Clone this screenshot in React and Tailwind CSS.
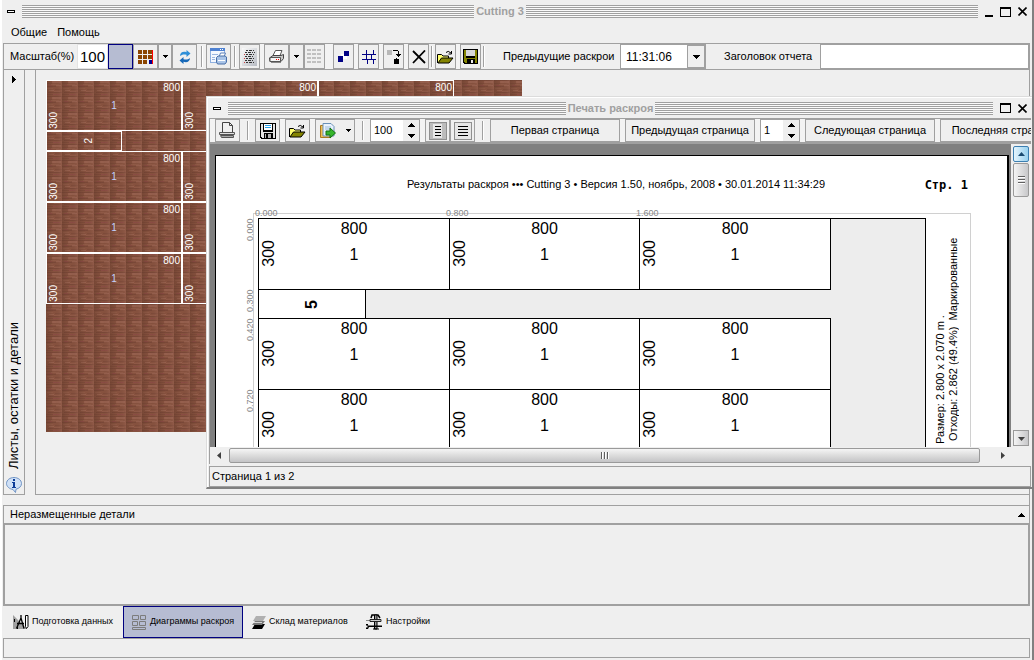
import clsx from 'clsx';

const Stripes = () => (
  <div className="flex-1 h-[13px] bg-[repeating-linear-gradient(to_bottom,#a0a0a0_0px,#a0a0a0_1px,#fafafa_1px,#fafafa_2px)]" />
);

const MenuBox = () => (
  <button aria-label="Системное меню" className="w-[8px] h-[3px] border border-black bg-white" />
);

const MaximizeIcon = () => (
  <svg width="11" height="10" shapeRendering="crispEdges"><path d="M0 0h11v10H0zM1 2v7h9V2z" fillRule="evenodd" /></svg>
);

const CloseIcon = () => (
  <svg width="9" height="9"><path d="M.5 .5l8 8M8.500 .5l-8 8" stroke="#000" strokeWidth="1.6" /></svg>
);

function TitleBar({ title, minimize, className }) {
  return (
    <div className={clsx('flex items-center shrink-0', className)}>
      <MenuBox />
      <div className="flex flex-1 items-center mx-[7px] gap-[2px]">
        <Stripes />
        <h1 className="text-[11px] leading-[13px] font-bold text-[#a0a0a0] whitespace-nowrap">{title}</h1>
        <Stripes />
      </div>
      <div className="flex items-center gap-[7px]">
        {minimize && (
          <button aria-label="Свернуть" className="h-[10px] flex items-end"><span className="block w-2 h-[2px] bg-black" /></button>
        )}
        <button aria-label="Развернуть"><MaximizeIcon /></button>
        <button aria-label="Закрыть"><CloseIcon /></button>
      </div>
    </div>
  );
}

/* ---- icons ---- */

const Down = () => <svg width="5" height="3" shapeRendering="crispEdges"><path d="M0 0h5v1H0zM1 1h3v1H1zM2 2h1v1H2z" /></svg>;
const BigDown = () => <svg width="7" height="4" shapeRendering="crispEdges"><path d="M0 0h7v1H0zM1 1h5v1H1zM2 2h3v1H2zM3 3h1v1H3z" /></svg>;
const BigUp = () => <svg width="7" height="4" shapeRendering="crispEdges"><path d="M3 0h1v1H3zM2 1h3v1H2zM1 2h5v1H1zM0 3h7v1H0z" /></svg>;

const ColorGridIcon = () => (
  <svg width="16" height="14" shapeRendering="crispEdges">
    <path d="M0 0h4v4H0zM5 0h4v4H5zM10 0h4v4h-4zM0 5h4v4H0zM5 5h4v4H5zM10 5h4v4h-4zM0 10h4v4H0zM5 10h4v4H5z" fill="#8b4500" />
    <path d="M11 10h3v4h-3z" fill="#000090" />
    <path d="M14 0h1v14h-1z" fill="#f00" />
  </svg>
);

const RefreshIcon = () => (
  <svg width="12" height="14" viewBox="0 0 12 14">
    <path d="M1 6C1 2.500 4 1 7.500 2.200V0L11.500 3.500 7.500 7V4.800C5 4 3 4.300 1 6z" fill="#2e8fd8" />
    <path d="M11 8c0 3.500-3 5-6.500 3.800V14L.5 10.500 4.500 7v2.200C7 10 9 9.700 11 8z" fill="#1668b8" />
  </svg>
);

const ReportIcon = () => (
  <svg width="17" height="17" viewBox="0 0 17 17">
    <rect x=".5" y=".5" width="14" height="14" fill="#f4f8ff" stroke="#8fb0e0" />
    <path d="M0 0h15v3H0z" fill="#4f82d2" />
    <path d="M10 1h1v1h-1zM12 1h1v1h-1z" fill="#fff" />
    <path d="M2 6.500h6M2 9.500h3M2 11.500h3" stroke="#9ab6e0" />
    <path d="M9 9l1.500-4h5L14 9z" fill="#fff" stroke="#5a7fb8" />
    <path d="M6.500 9.500L8 8h7l1.500 1v5l-1.500 2H7.500l-1-2z" fill="#a9c4e8" stroke="#4a70a8" />
    <path d="M8 12.500h7" stroke="#fff" />
  </svg>
);

const TextListIcon = () => (
  <svg width="15" height="18" shapeRendering="crispEdges">
    <defs>
      <linearGradient id="paper" x2="1" y2="1"><stop offset="0" stopColor="#fafafa" /><stop offset="1" stopColor="#b8bcc4" /></linearGradient>
    </defs>
    <path d="M0 0h15v18H0z" fill="url(#paper)" />
    <path d="M3.500 2.500h9M2.500 4.500h10M3.500 6.500h9M2.500 8.500h9M3.500 10.500h9M2.500 12.500h9M3.500 14.500h9" stroke="#333" strokeDasharray="2 1 3 1 1 1" />
    <path d="M2 6h1v1H2zM2 10h1v1H2zM2 14h1v1H2z" fill="#d04040" />
  </svg>
);

const PrinterIcon = () => (
  <svg width="15" height="13" viewBox="0 0 15 13">
    <path d="M4 5.500L6.500 .5H13l-2 5z" fill="#fff" stroke="#555" />
    <path d="M.5 8L4 5.500h8l2.500-1v4L12 11.500H1z" fill="#c8c8c8" stroke="#444" />
    <path d="M1 7.500h10.500v4H1z" fill="#f5f5f5" stroke="#555" />
    <path d="M7 9h1v1H7zM9 9h1v1H9z" fill="#e00" />
    <path d="M2 12.500h10" stroke="#888" />
  </svg>
);

const GreyGridIcon = () => (
  <svg width="15" height="15" shapeRendering="crispEdges">
    {[0, 4, 8, 12].map((y) => <path key={y} d={`M0 ${y}h4v2H0zM5 ${y}h4v2H5zM10 ${y}h4v2h-4z`} fill="#c0c0c0" />)}
  </svg>
);

const SquaresIcon = () => (
  <svg width="12" height="11" shapeRendering="crispEdges">
    <path d="M3 3h6v5H3z" fill="#fff" /><path d="M6 0h5v5H6zM0 5h5v6H0z" fill="#000084" />
  </svg>
);

const CutLinesIcon = () => (
  <svg width="14" height="14" shapeRendering="crispEdges">
    <path d="M0 4h14v1H0zM0 9h14v1H0zM4 0h1v10H4zM11 0h1v4h-1zM9 4h1v6H9zM5 9h1v5H5zM11 9h1v5h-1z" fill="#000084" />
  </svg>
);

const MoveIcon = () => (
  <svg width="14" height="15" shapeRendering="crispEdges">
    <path d="M0 1h5v5H0z" fill="#b8b8b8" />
    <path d="M6 1h5v1H6zM11 2h1v6h-1zM9 5h5v1H9zM10 6h3v1h-3zM7 10h5v5H7zM9 9h1v1H9z" />
  </svg>
);

const DeleteIcon = () => (
  <svg width="14" height="14"><path d="M1 1l12 12M13 .5L1 13" stroke="#000" strokeWidth="1.8" fill="none" /></svg>
);

const OpenIcon = () => (
  <svg width="17" height="14" viewBox="0 0 17 14">
    <path d="M.5 13V4.500h4L6 6h5.500v2" fill="#ffff70" stroke="#000" />
    <path d="M1 13L4.500 8H16l-4 5z" fill="#848400" stroke="#000" />
    <path d="M9 2.500q2-2.500 5 .5M14.500 1v3h-3" fill="none" stroke="#000" />
  </svg>
);

const FloppyIcon = () => (
  <svg width="15" height="15" shapeRendering="crispEdges">
    <path d="M0 0h15v15H1l-1-1z" />
    <path d="M1 1h2v8h9V1h2v13h-2v-4H4v4H2v-1H1z" fill="#848400" />
    <path d="M3 1h9v6H3z" fill="#d8d8d8" />
    <path d="M8 11h2v3H8z" fill="#eee" />
  </svg>
);

const SaveBlueIcon = () => (
  <svg width="16" height="16" shapeRendering="crispEdges">
    <path d="M0 0h16v16H1l-1-1z" />
    <path d="M1 1h2v8h10V1h2v14h-2v-5H4v5H2v-1H1z" fill="#e4e4e4" />
    <path d="M4 1h8v6H4z" fill="#fff" />
    <path d="M5 2h6v1H5zM5 4h6v1H5z" fill="#28a0e8" />
    <path d="M5 11h6v4H5z" fill="#b0b0b0" /><path d="M6 11h2v4H6z" />
  </svg>
);

const PagePrintIcon = () => (
  <svg width="17" height="17" viewBox="0 0 17 17">
    <path d="M3.500 10V.5h7l3 3V10" fill="#f0f0f0" stroke="#444" />
    <path d="M10.500 .5v3h3" fill="none" stroke="#444" />
    <path d="M.5 10.500h15v2H.5z" fill="#e0e0e0" stroke="#555" />
    <path d="M1.500 13.500h13v2h-12z" fill="#aaa" stroke="#555" />
  </svg>
);

const ClipboardIcon = () => (
  <svg width="16" height="16" viewBox="0 0 16 16">
    <path d="M.5 2.500h10v12H.5z" fill="#f0c050" stroke="#a87820" />
    <path d="M3 .5h8l3 3V13H3z" fill="#e8f2fc" stroke="#6a90b8" />
    <path d="M5 4h6M5 6h6" stroke="#9dbbdc" />
    <path d="M6 8h4V5l5.500 5L10 15v-3H6z" fill="#35b52c" stroke="#147010" />
  </svg>
);

const PageLinesIcon = ({ full }) => (
  <svg width="18" height="18" shapeRendering="crispEdges">
    <path d="M0 0h18v18H0z" fill="#909090" />
    <path d="M1 1h16v16H1z" fill={full ? '#e6e6e6' : '#bcbcbc'} />
    {full
      ? <path d="M4 4h10v1H4zM4 7h10v1H4zM4 10h10v1H4zM4 13h10v1H4z" />
      : <><path d="M4 2h9v14H4z" fill="#e8e8e8" /><path d="M6 4h6v1H6zM6 7h6v1H6zM6 10h6v1H6zM6 13h6v1H6z" /></>}
  </svg>
);

const InfoIcon = () => (
  <svg width="16" height="16" viewBox="0 0 16 16">
    <path d="M8 .5c4 0 7.500 2.500 7.500 6 0 3-2.500 5-5.500 5.700L9.500 15.500 7 12.500C3.500 12 .5 9.500 .5 6.500.5 3 4 .5 8 .5z" fill="#cfe0f6" stroke="#6f93c4" />
    <path d="M7 2h2v2H7zM6 5h3v5h1v1H6v-1h1V6H6z" fill="#0c3c98" />
  </svg>
);

const PrepareIcon = () => (
  <svg width="16" height="16" viewBox="0 0 16 16">
    <path d="M0 1l14 14H0z" fill="#a0a0a0" />
    <path d="M3.500 14.500L8 4l3 10.500M4 9.500h7M8 1v4" stroke="#000" fill="none" strokeWidth="1.300" />
    <path d="M12.500 1.500h2.500v11l-1.500 2-1-2z" fill="#fff" stroke="#000" />
    <path d="M1.500 5v3M4.500 13v2" stroke="#000" />
  </svg>
);

const DiagramIcon = () => (
  <svg width="15" height="15" fill="none" stroke="#7c7c7c">
    <path d="M.5 .5h6v4h-6zM8.500 .5h5v4h-5zM.5 6.500h5v4h-5zM7.500 6.500h6v4h-6zM.5 12.500h13v2H.500z" />
  </svg>
);

const StackIcon = () => (
  <svg width="14" height="14" viewBox="0 0 14 14">
    <path d="M3 9h10l-3 5H0z" /><path d="M3 6h10l-3 4H0z" fill="#777" /><path d="M4 1h10l-3 5H1z" fill="#b0b0b0" />
    <path d="M1 7.500h9" stroke="#eee" strokeWidth=".8" />
  </svg>
);

const SettingsIcon = () => (
  <svg width="17" height="16" viewBox="0 0 17 16">
    <path d="M5 4l1-3h6l2 3" stroke="#000" fill="none" strokeWidth="1.500" />
    <path d="M8.500 1h2.500v14h-2.500z" fill="#999" stroke="#000" />
    <path d="M0 6.500h4" stroke="#888" />
    <path d="M4 5.500h11v2H4z" stroke="#222" fill="#ccc" />
    <path d="M0 10h2v1.500h14V13H3l-1 2H0v-1.500h1.500v-2H0z" />
    <path d="M7 15h6" stroke="#000" />
  </svg>
);

/* ---- toolbar parts ---- */

function Tool({ label, className = 'w-[25px]', children }) {
  return (
    <button aria-label={label} title={label} className={clsx('h-full shrink-0 flex items-center justify-center border border-[#a0a0a0] bg-[#efefef] text-[11px] whitespace-nowrap', className)}>
      {children}
    </button>
  );
}

const Gap = ({ className = 'w-[5px]' }) => <div className={clsx('h-full shrink-0 bg-[#f3f3f3]', className)} />;

const Sep = ({ className = 'w-[15px]' }) => (
  <div className={clsx('h-full shrink-0 flex justify-center py-[2px] bg-[#f0f0f0]', className)}>
    <div className="w-[2px] border-l border-[#a0a0a0] bg-white" />
  </div>
);

function Spin({ label, value, className }) {
  return (
    <div className={clsx('h-full shrink-0 flex border border-[#a0a0a0]', className)}>
      <input aria-label={label} defaultValue={value} className="flex-1 min-w-0 bg-white pl-[3px] text-[11px] outline-none" />
      <div className="w-4 flex flex-col items-center justify-center gap-[7px]">
        <button aria-label={`${label}: больше`}><BigUp /></button>
        <button aria-label={`${label}: меньше`}><BigDown /></button>
      </div>
    </div>
  );
}

function MainToolbar() {
  return (
    <div className="h-[27px] shrink-0 flex items-center border border-[#a0a0a0] text-[11px] whitespace-nowrap">
      <label htmlFor="scale" className="w-[73px] pl-[6px] shrink-0">Масштаб(%)</label>
      <input id="scale" defaultValue="100" className="w-[31px] h-full shrink-0 bg-white border border-[#e4e4e4] pl-[2px] text-[15px] outline-none" />
      <button aria-label="Фон" className="w-[25px] h-full shrink-0 bg-[#b6bcd2] border border-[#000080]" />
      <Tool label="Цвета"><ColorGridIcon /></Tool>
      <Tool label="Выбор цвета" className="w-[14px]"><Down /></Tool>
      <Tool label="Обновить"><RefreshIcon /></Tool>
      <Sep className="w-[9px]" />
      <Tool label="Отчет"><ReportIcon /></Tool>
      <Sep className="w-2" />
      <Tool label="Список" className="w-[21px]"><TextListIcon /></Tool>
      <Gap className="w-1" />
      <Tool label="Печать"><PrinterIcon /></Tool>
      <Tool label="Варианты печати" className="w-[15px]"><Down /></Tool>
      <Tool label="Таблица" className="w-[21px]"><GreyGridIcon /></Tool>
      <Gap className="w-2" />
      <Tool label="Детали" className="w-[21px]"><SquaresIcon /></Tool>
      <Gap className="w-1" />
      <Tool label="Линии реза" className="w-[21px]"><CutLinesIcon /></Tool>
      <Gap className="w-1" />
      <Tool label="Переместить" className="w-[21px]"><MoveIcon /></Tool>
      <Gap className="w-1" />
      <Tool label="Удалить" className="w-[21px]"><DeleteIcon /></Tool>
      <Sep className="w-[6px]" />
      <Tool label="Открыть" className="w-[21px]"><OpenIcon /></Tool>
      <Gap className="w-1" />
      <Tool label="Сохранить" className="w-[21px]"><FloppyIcon /></Tool>
      <Sep className="w-[6px]" />
      <label htmlFor="previous" className="pl-4 w-[133px] shrink-0">Предыдущие раскрои</label>
      <div className="relative h-full w-[86px] shrink-0 border border-[#a0a0a0]">
        <select id="previous" className="w-full h-full appearance-none bg-white pl-[5px] text-[12px] outline-none">
          <option>11:31:06</option>
        </select>
        <span className="absolute right-0 inset-y-0 w-[18px] border border-[#a0a0a0] bg-[#efefef] flex items-center justify-center pointer-events-none"><BigDown /></span>
      </div>
      <label htmlFor="report-title" className="w-[114px] shrink-0 pl-[18px]">Заголовок отчета</label>
      <input id="report-title" className="flex-1 min-w-0 h-full bg-white border border-[#a0a0a0] outline-none px-1" />
    </div>
  );
}

/* ---- brown sheet ---- */

function Texture() {
  return (
    <svg className="absolute inset-0 w-full h-full" aria-hidden="true">
      <defs>
        <linearGradient id="shade">
          <stop offset="0" stopColor="#5a3424" stopOpacity=".35" />
          <stop offset=".5" stopColor="#5a3424" stopOpacity="0" />
          <stop offset="1" stopColor="#a87060" stopOpacity=".3" />
        </linearGradient>
        <pattern id="wood" width="16" height="16" patternUnits="userSpaceOnUse" shapeRendering="crispEdges">
          <path d="M0 0h16v16H0z" fill="#87523f" />
          <path d="M0 0h16v1H0zM0 6h10v1H0zM2 12h14v1H2z" fill="#7a4838" />
          <path d="M0 3h6v1H0zM9 9h7v1H9zM0 14h8v1H0z" fill="#7e4b3a" />
          <path d="M5 4h8v1H5zM1 8h6v1H1zM8 11h6v1H8z" fill="#905a47" />
          <path d="M6 1h9v2H6zM10 5h5v1h-5zM3 10h5v1H3z" fill="#96604e" />
          <path d="M2 5h4v1H2zM7 14h7v1H7z" fill="#8a4c44" />
          <path d="M0 0h16v16H0z" fill="url(#shade)" />
        </pattern>
      </defs>
      <rect width="100%" height="100%" fill="url(#wood)" />
    </svg>
  );
}

function WoodPiece() {
  return (
    <div className="relative w-[136px] h-[51px] border border-white text-[10px] leading-[11px] text-white">
      <span className="absolute top-px right-px">800</span>
      <span className="absolute inset-0 flex items-center justify-center text-[#c4d2ff]">1</span>
      <span className="absolute left-px bottom-px [writing-mode:vertical-rl] rotate-180">300</span>
    </div>
  );
}

const WoodRow = () => <div className="flex"><WoodPiece /><WoodPiece /><WoodPiece /></div>;

function Sheet() {
  return (
    <div className="relative w-[476px] h-[352px] overflow-hidden">
      <Texture />
      <div className="relative">
        <WoodRow />
        <div className="w-[76px] h-5 border border-white flex items-center justify-center pl-2 text-[10px] leading-[11px] text-white">
          <span className="[writing-mode:vertical-rl] rotate-180">2</span>
        </div>
        <WoodRow />
        <WoodRow />
        <WoodRow />
      </div>
    </div>
  );
}

/* ---- print preview ---- */

const ruler = 'text-[9px] leading-[9px] text-[#888]';

function Piece() {
  return (
    <div className="relative flex flex-col items-center pt-px border-r border-b border-black bg-white text-[16px] leading-[18px] gap-2">
      <span>800</span>
      <span>1</span>
      <span className="absolute left-px top-[21px] [writing-mode:vertical-rl] rotate-180">300</span>
    </div>
  );
}

const PieceRow = () => (
  <div className="grid grid-cols-[191px_190px_191px] h-[71px]"><Piece /><Piece /><Piece /></div>
);

function PrintedPage() {
  return (
    <div className="flex-1 h-[360px] mt-[11px] ml-[5px] mr-[2px] bg-white border border-r-2 border-black overflow-hidden">
      <div className="flex items-center justify-between h-[57px] pl-[191px] pr-[39px]">
        <p className="text-[11px] whitespace-nowrap">Результаты раскроя ••• Cutting 3 • Версия 1.50, ноябрь, 2008 • 30.01.2014 11:34:29</p>
        <p className="font-['DejaVu_Sans_Mono',monospace] text-[12px] font-bold whitespace-nowrap">Стр. 1</p>
      </div>
      <div className="relative ml-[37px] mr-[36px] h-[400px] border border-[#d0d0d0]">
        <div className={clsx('absolute left-px top-[-5px] grid grid-cols-[191px_190px_191px]', ruler)}>
          <span>0.000</span><span>0.800</span><span>1.600</span>
        </div>
        <div className={clsx('absolute left-[-8px] top-[4px] flex flex-col', ruler)}>
          <span className="h-[71px] [writing-mode:vertical-rl] rotate-180 text-right">0.000</span>
          <span className="h-[29px] [writing-mode:vertical-rl] rotate-180 text-right">0.300</span>
          <span className="h-[71px] [writing-mode:vertical-rl] rotate-180 text-right">0.420</span>
          <span className="h-[71px] [writing-mode:vertical-rl] rotate-180 text-right">0.720</span>
        </div>
        <div className="flex mt-1 ml-1">
          <div className="w-[668px] h-[350px] border border-black bg-[#ededed]">
            <PieceRow />
            <div className="w-[107px] h-[28px] border-r border-black bg-white flex items-center justify-center text-[16px] leading-[18px] font-bold">
              <span className="[writing-mode:vertical-rl] rotate-180">5</span>
            </div>
            <div className="border-t border-black w-[572px]"><PieceRow /></div>
            <PieceRow />
          </div>
          <div className="ml-2 h-[226px] text-[11px] leading-[13px] [writing-mode:vertical-rl] rotate-180 flex flex-col whitespace-pre">
            <span>Размер: 2.800 x 2.070 m .</span>
            <span> Отходы: 2.862 (49.4%)  Маркированные</span>
          </div>
        </div>
      </div>
    </div>
  );
}

const Arrow = ({ d, fill = '#404040' }) => <svg width="7" height="7"><path d={d} fill={fill} /></svg>;

function VerticalScroll() {
  return (
    <div className="w-[20px] shrink-0 flex flex-col bg-[#efefef] pl-[2px]">
      <button aria-label="Вверх" className="mt-[2px] h-4 w-4 rounded-xs border border-[#3c7fb1] bg-linear-to-r from-[#e4f4fc] to-[#98d1ef] flex items-center justify-center"><Arrow d="M0 5l3.500-4L7 5z" fill="#1a4a70" /></button>
      <div className="mt-px h-[34px] w-4 rounded-xs border border-[#9a9a9a] bg-linear-to-r from-[#f4f4f4] to-[#c8c8ca] flex flex-col items-center justify-center gap-px">
        <i className="w-[7px] h-[2px] bg-[#606060] border-b border-white" />
        <i className="w-[7px] h-[2px] bg-[#606060] border-b border-white" />
        <i className="w-[7px] h-[2px] bg-[#606060] border-b border-white" />
      </div>
      <button aria-label="Вниз" className="mt-auto mb-px h-4 w-4 border border-[#9a9a9a] bg-linear-to-r from-[#f4f4f4] to-[#c8c8ca] flex items-center justify-center"><Arrow d="M0 2l3.500 4L7 2z" /></button>
    </div>
  );
}

function HorizontalScroll() {
  return (
    <div className="h-[17px] flex items-center bg-[#efefef] pr-5">
      <button aria-label="Влево" className="w-[19px] h-full flex items-center justify-center"><Arrow d="M5 0v7L1 3.500z" /></button>
      <div className="flex-1 h-[15px] rounded-xs border border-[#9a9a9a] bg-linear-to-b from-[#f5f5f5] via-[#dcdcdc] to-[#c4c4c6] flex items-center justify-center gap-px">
        <i className="w-[2px] h-[7px] bg-[#606060] border-r border-white" />
        <i className="w-[2px] h-[7px] bg-[#606060] border-r border-white" />
        <i className="w-[2px] h-[7px] bg-[#606060] border-r border-white" />
      </div>
      <div className="w-[31px] h-full pl-[14px] flex items-center justify-center"><button aria-label="Вправо"><Arrow d="M2 0v7l4-3.500z" /></button></div>
    </div>
  );
}

function PreviewWindow() {
  return (
    <section className="absolute left-[204px] right-0 top-24 bg-[#efefef] border-t border-l border-[#dcdcdc] border-b-2 border-b-[#808080]">
      <div className="border-t border-l border-white px-px">
        <TitleBar title="Печать раскроя" className="h-5 pl-1 pr-1" />
        <div className="h-[26px] flex border border-b-2 border-[#a0a0a0] border-r-0 overflow-hidden">
          <Gap />
          <Tool label="Печать"><PagePrintIcon /></Tool>
          <Sep />
          <Tool label="Сохранить"><SaveBlueIcon /></Tool>
          <Gap />
          <Tool label="Открыть"><OpenIcon /></Tool>
          <Gap />
          <Tool label="Экспорт" className="w-10 gap-[10px]"><ClipboardIcon /><Down /></Tool>
          <Sep />
          <Spin label="Масштаб" value="100" className="w-[50px]" />
          <Gap />
          <Tool label="Страница целиком"><PageLinesIcon /></Tool>
          <Tool label="По ширине"><PageLinesIcon full /></Tool>
          <Sep />
          <Tool className="w-[130px]">Первая страница</Tool>
          <Gap />
          <Tool className="w-[130px]">Предыдущая страница</Tool>
          <Gap />
          <Spin label="Страница" value="1" className="w-10" />
          <Gap />
          <Tool className="w-[130px]">Следующая страница</Tool>
          <Gap />
          <Tool className="w-[130px]">Последняя страница</Tool>
        </div>
        <div className="border-l border-[#a0a0a0]">
          <div className="h-[303px] flex bg-[#808080] overflow-hidden">
            <PrintedPage />
            <VerticalScroll />
          </div>
          <HorizontalScroll />
        </div>
        <footer className="mt-[2px] h-[21px] border border-[#a0a0a0] pl-[2px] flex items-center text-[11px]">Страница 1 из 2</footer>
      </div>
    </section>
  );
}

/* ---- main window ---- */

function SidePanel() {
  return (
    <aside className="w-[22px] flex flex-col items-center border border-t-0 border-[#a0a0a0] pt-[6px] pb-px">
      <button aria-label="Развернуть панель"><svg width="4" height="7" shapeRendering="crispEdges"><path d="M0 0h1v7H0zM1 1h1v5H1zM2 2h1v3H2zM3 3h1v1H3z" /></svg></button>
      <span className="mt-auto mb-2 text-[13px] leading-[14px] [writing-mode:vertical-rl] rotate-180 whitespace-nowrap">Листы, остатки и детали</span>
      <InfoIcon />
    </aside>
  );
}

function Tab({ icon, label, active, className }) {
  return (
    <button className={clsx('h-8 flex items-center gap-[3px] border text-[9px] whitespace-nowrap', active ? 'border-[#000080] bg-[#b6bcd2]' : 'border-transparent', className)}>
      {icon}
      {label}
    </button>
  );
}

export default function App() {
  return (
    <div className="relative min-h-screen flex flex-col overflow-hidden bg-[#efefef] border-l-2 border-l-white border-r-2 border-r-[#808080] pl-px font-['Liberation_Sans',Arial,sans-serif] text-black">
      <TitleBar title="Cutting 3" minimize className="h-[23px] pl-1 pr-[5px]" />
      <nav className="h-5 shrink-0 flex gap-[10px] pl-2 pt-px text-[11px]">
        <button className="h-4">Общие</button>
        <button className="h-4">Помощь</button>
      </nav>

      <div className="flex-1 flex flex-col mr-[2px]">
        <MainToolbar />
        <main className="flex-1 flex pb-[10px] border-r border-[#a0a0a0]">
          <SidePanel />
          <div className="flex-1 ml-[10px] pt-[10px] pl-[10px] pb-[62px] border-l border-b border-[#a0a0a0]">
            <Sheet />
          </div>
        </main>
        <header className="h-[18px] shrink-0 flex items-center justify-between px-[6px] pr-[4px] border border-b-0 border-[#a0a0a0] text-[11px]">
          <h2>Неразмещенные детали</h2>
          <button aria-label="Свернуть панель"><BigUp /></button>
        </header>
        <div className="h-[83px] shrink-0 border-2 border-[#a0a0a0]" />
        <nav className="h-8 shrink-0 flex">
          <Tab className="w-[120px] pl-[9px]" icon={<PrepareIcon />} label="Подготовка данных" />
          <Tab className="w-[120px] pl-2" active icon={<DiagramIcon />} label="Диаграммы раскроя" />
          <Tab className="w-[114px] pl-2" icon={<StackIcon />} label="Склад материалов" />
          <Tab className="w-[80px] pl-2" icon={<SettingsIcon />} label="Настройки" />
        </nav>
        <footer className="h-5 shrink-0 mb-[2px] border border-[#a0a0a0]" />
      </div>
      {/* the preview floats over the workspace */}
      <PreviewWindow />
    </div>
  );
}
